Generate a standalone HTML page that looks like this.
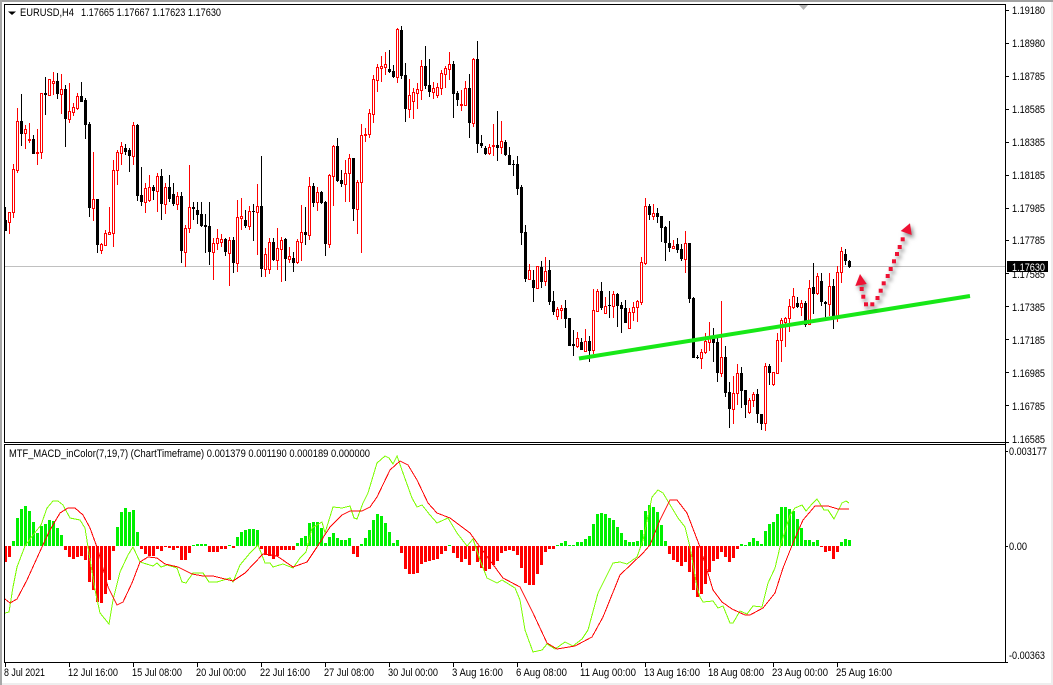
<!DOCTYPE html>
<html><head><meta charset="utf-8"><title>EURUSD,H4</title>
<style>
html,body{margin:0;padding:0;background:#fff;width:1053px;height:685px;overflow:hidden}
svg{display:block}
text{font-family:"Liberation Sans",sans-serif;font-size:11px;fill:#000}
</style></head><body>
<svg width="1053" height="685" viewBox="0 0 1053 685" xmlns="http://www.w3.org/2000/svg">
<rect width="1053" height="685" fill="#fff"/>
<rect x="0" y="0" width="1053" height="2" fill="#a0a0a0"/>
<rect x="0" y="0" width="2" height="685" fill="#a8a8a8"/>
<rect x="1051" y="2" width="2" height="683" fill="#eeeeee"/>
<rect x="2" y="683" width="1051" height="2" fill="#eeeeee"/>
<path d="M799 5h9l-4.500 5z" fill="#b4b4b4"/>
<g shape-rendering="crispEdges">
<path d="M5 266.500H1005" stroke="#c0c0c0" stroke-width="1" fill="none"/>
<!-- black wicks -->
<path fill="none" stroke="#000" stroke-width="1" d="M5.500 207V230M21.500 94V146M33.500 135V154M45.500 77V115M57.500 73V99M65.500 85V147M81.500 82V102M85.500 98V139M89.500 122V217M97.500 199V253M125.500 144V155M129.500 148V172M137.500 124V201M141.500 167V206M153.500 185V200M161.500 169V220M169.500 175V202M173.500 183V206M181.500 192V263M193.500 202V220M197.500 202V224M201.500 202V227M205.500 214V253M209.500 202V265M225.500 238V256M233.500 237V273M245.500 210V228M253.500 204V241M261.500 156V277M273.500 238V261M285.500 238V281M293.500 252V272M305.500 207V245M313.500 183V207M321.500 191V204M325.500 201V256M337.500 138V182M341.500 170V187M353.500 158V221M389.500 50V73M393.500 65V78M401.500 26V79M405.500 63V122M425.500 46V89M429.500 59V97M453.500 61V118M457.500 91V106M469.500 74V138M477.500 41V153M481.500 135V148M485.500 146V155M497.500 111V161M505.500 140V156M509.500 147V165M513.500 160V176M517.500 156V195M521.500 185V245M525.500 225V282M533.500 270V302M541.500 261V288M549.500 260V305M553.500 291V315M565.500 300V328M569.500 318V346M573.500 330V356M581.500 338V350M589.500 336V362M601.500 282V310M609.500 291V318M617.500 293V327M621.500 302V333M625.500 300V323M649.500 204V220M657.500 208V223M661.500 216V242M665.500 226V261M669.500 221V252M677.500 238V253M681.500 244V261M689.500 243V303M693.500 297V358M697.500 355V359M713.500 328V362M717.500 338V382M725.500 346V397M729.500 382V428M741.500 367V408M745.500 390V418M757.500 389V423M761.500 414V430M769.500 364V385M797.500 297V308M805.500 301V327M813.500 263V314M821.500 273V306M825.500 301V317M833.500 279V329M845.500 249V265M849.500 260V268"/>
<!-- black bodies -->
<path fill="none" stroke="#000" stroke-width="3" d="M5.500 220V231M21.500 121V134M33.500 139V154M45.500 93V95M57.500 81V94M65.500 89V119M81.500 96V102M85.500 100V125M89.500 124V208M97.500 199V245M125.500 148V152M129.500 150V156M137.500 125V196M141.500 195V202M153.500 187V191M161.500 176V204M169.500 187V199M173.500 194V204M181.500 196V251M193.500 207V209M197.500 210V215M201.500 214V226M205.500 225V227M209.500 226V252M225.500 239V252M233.500 240V263M245.500 220V226M253.500 211V212M261.500 206V269M273.500 242V260M285.500 239V259M293.500 258V263M305.500 232V235M313.500 186V203M321.500 192V203M325.500 202V244M337.500 146V181M341.500 180V184M353.500 158V209M389.500 69V72M393.500 71V77M401.500 30V76M405.500 75V109M425.500 66V86M429.500 85V92M453.500 64V94M457.500 93V100M469.500 88V123M477.500 59V144M481.500 143V146M485.500 148V154M497.500 145V148M505.500 142V155M509.500 155V165M513.500 164V165M517.500 164V189M521.500 187V233M525.500 232V279M533.500 280V288M541.500 267V282M549.500 270V302M553.500 301V312M565.500 308V319M569.500 318V346M573.500 344V346M581.500 342V350M589.500 341V351M601.500 291V308M609.500 305V306M617.500 294V306M621.500 305V309M625.500 308V323M649.500 206V215M657.500 213V217M661.500 216V228M665.500 227V243M669.500 243V248M677.500 244V250M681.500 249V259M689.500 243V299M693.500 298V358M697.500 357V358M713.500 338V343M717.500 342V373M725.500 357V393M729.500 392V409M741.500 373V391M745.500 390V405M757.500 394V414M761.500 414V424M769.500 366V373M797.500 303V307M805.500 303V325M813.500 287V294M821.500 281V302M825.500 302V304M833.500 286V317M845.500 254V261M849.500 261V267"/>
<!-- red wicks -->
<path fill="none" stroke="#f00" stroke-width="1" d="M9.500 212V234M13.500 164V218M17.500 108V173M25.500 125V149M29.500 123V143M37.500 129V165M41.500 93V159M49.500 79V96M53.500 72V95M61.500 74V114M69.500 83V123M73.500 103V116M77.500 93V110M93.500 152V221M101.500 243V254M105.500 230V246M109.500 207V235M113.500 160V247M117.500 150V185M121.500 142V165M133.500 122V165M145.500 183V213M149.500 175V202M157.500 173V212M165.500 183V214M177.500 192V210M185.500 225V267M189.500 165V233M213.500 238V280M217.500 229V250M221.500 234V247M229.500 237V286M237.500 200V272M241.500 198V230M249.500 206V230M257.500 184V255M265.500 248V277M269.500 238V274M277.500 228V270M281.500 237V282M289.500 247V263M297.500 239V264M301.500 205V261M309.500 177V240M317.500 187V211M329.500 174V248M333.500 145V206M345.500 160V202M349.500 154V202M357.500 180V234M361.500 124V253M365.500 128V142M369.500 109V138M373.500 75V123M377.500 64V92M381.500 56V82M385.500 52V75M397.500 28V83M409.500 79V118M413.500 88V119M417.500 83V109M421.500 60V100M433.500 82V99M437.500 83V98M441.500 70V95M445.500 66V88M449.500 52V80M461.500 90V111M465.500 81V105M473.500 58V127M489.500 144V155M493.500 124V156M501.500 121V154M529.500 264V280M537.500 266V288M545.500 257V286M557.500 307V320M561.500 305V319M577.500 332V348M585.500 329V352M593.500 289V354M597.500 289V312M605.500 297V314M613.500 291V318M629.500 308V328M633.500 302V321M637.500 300V322M641.500 257V305M645.500 198V265M653.500 204V220M673.500 240V249M685.500 231V273M701.500 349V369M705.500 333V354M709.500 322V351M721.500 301V377M733.500 376V424M737.500 364V405M749.500 398V414M753.500 392V407M765.500 363V431M773.500 372V386M777.500 333V374M781.500 318V362M785.500 317V347M789.500 299V332M793.500 288V309M801.500 300V316M809.500 280V325M817.500 273V295M829.500 273V316M837.500 266V322M841.500 247V283"/>
<!-- red hollow bodies -->
<path fill="#fff" stroke="#f00" stroke-width="1" d="M8.500 212.500h2V222.500h-2zM12.500 169.500h2V212.500h-2zM16.500 121.500h2V170.500h-2zM24.500 129.500h2V133.500h-2zM28.500 139.500h2V140.500h-2zM36.500 152.500h2V153.500h-2zM40.500 93.500h2V152.500h-2zM48.500 79.500h2V95.500h-2zM52.500 81.500h2V83.500h-2zM60.500 89.500h2V94.500h-2zM68.500 111.500h2V119.500h-2zM72.500 107.500h2V112.500h-2zM76.500 96.500h2V108.500h-2zM92.500 199.500h2V208.500h-2zM100.500 244.500h2V250.500h-2zM104.500 233.500h2V245.500h-2zM108.500 232.500h2V234.500h-2zM112.500 170.500h2V233.500h-2zM116.500 152.500h2V170.500h-2zM120.500 146.500h2V153.500h-2zM132.500 125.500h2V156.500h-2zM144.500 188.500h2V202.500h-2zM148.500 187.500h2V200.500h-2zM156.500 176.500h2V191.500h-2zM164.500 187.500h2V204.500h-2zM176.500 196.500h2V204.500h-2zM184.500 228.500h2V252.500h-2zM188.500 207.500h2V228.500h-2zM212.500 243.500h2V252.500h-2zM216.500 238.500h2V243.500h-2zM220.500 239.500h2V242.500h-2zM228.500 240.500h2V253.500h-2zM236.500 217.500h2V263.500h-2zM240.500 216.500h2V218.500h-2zM248.500 211.500h2V226.500h-2zM256.500 206.500h2V212.500h-2zM264.500 254.500h2V269.500h-2zM268.500 242.500h2V269.500h-2zM276.500 248.500h2V260.500h-2zM280.500 240.500h2V249.500h-2zM288.500 256.500h2V259.500h-2zM296.500 241.500h2V262.500h-2zM300.500 232.500h2V242.500h-2zM308.500 186.500h2V235.500h-2zM316.500 192.500h2V202.500h-2zM328.500 175.500h2V244.500h-2zM332.500 146.500h2V176.500h-2zM344.500 173.500h2V184.500h-2zM348.500 158.500h2V173.500h-2zM356.500 182.500h2V209.500h-2zM360.500 135.500h2V182.500h-2zM364.500 134.500h2V135.500h-2zM368.500 113.500h2V134.500h-2zM372.500 79.500h2V114.500h-2zM376.500 67.500h2V80.500h-2zM380.500 66.500h2V68.500h-2zM384.500 64.500h2V67.500h-2zM396.500 29.500h2V77.500h-2zM408.500 95.500h2V109.500h-2zM412.500 92.500h2V101.500h-2zM416.500 89.500h2V93.500h-2zM420.500 66.500h2V90.500h-2zM432.500 88.500h2V92.500h-2zM436.500 87.500h2V95.500h-2zM440.500 73.500h2V88.500h-2zM444.500 68.500h2V74.500h-2zM448.500 64.500h2V69.500h-2zM460.500 104.500h2V105.500h-2zM464.500 88.500h2V105.500h-2zM472.500 59.500h2V123.500h-2zM488.500 147.500h2V153.500h-2zM492.500 145.500h2V146.500h-2zM500.500 141.500h2V147.500h-2zM528.500 270.500h2V279.500h-2zM536.500 266.500h2V288.500h-2zM544.500 271.500h2V281.500h-2zM556.500 309.500h2V316.500h-2zM560.500 308.500h2V310.500h-2zM576.500 338.500h2V346.500h-2zM584.500 341.500h2V351.500h-2zM592.500 310.500h2V350.500h-2zM596.500 291.500h2V311.500h-2zM604.500 306.500h2V313.500h-2zM612.500 294.500h2V306.500h-2zM628.500 312.500h2V328.500h-2zM632.500 307.500h2V312.500h-2zM636.500 301.500h2V307.500h-2zM640.500 262.500h2V302.500h-2zM644.500 206.500h2V263.500h-2zM652.500 213.500h2V216.500h-2zM672.500 246.500h2V248.500h-2zM684.500 243.500h2V259.500h-2zM700.500 352.500h2V358.500h-2zM704.500 341.500h2V352.500h-2zM708.500 338.500h2V342.500h-2zM720.500 357.500h2V373.500h-2zM732.500 393.500h2V409.500h-2zM736.500 373.500h2V393.500h-2zM748.500 400.500h2V412.500h-2zM752.500 394.500h2V400.500h-2zM764.500 366.500h2V423.500h-2zM772.500 372.500h2V384.500h-2zM776.500 340.500h2V373.500h-2zM780.500 320.500h2V340.500h-2zM784.500 318.500h2V322.500h-2zM788.500 306.500h2V318.500h-2zM792.500 296.500h2V307.500h-2zM800.500 303.500h2V307.500h-2zM808.500 288.500h2V324.500h-2zM816.500 276.500h2V293.500h-2zM828.500 286.500h2V304.500h-2zM836.500 272.500h2V317.500h-2zM840.500 251.500h2V272.500h-2z"/>
<!-- histogram green -->
<path fill="none" stroke="#00f000" stroke-width="3" d="M13.500 546v-5M17.500 546v-28M21.500 546v-37M25.500 546v-40M29.500 546v-35M33.500 546v-24M37.500 546v-13M41.500 546v-20M45.500 546v-22M49.500 546v-26M53.500 546v-25M57.500 546v-18M61.500 546v-11M117.500 546v-19M121.500 546v-34M125.500 546v-38M129.500 546v-34M133.500 546v-36M137.500 546v-14M193.500 546v-1M197.500 546v-2M201.500 546v-2M205.500 546v-2M229.500 546v-1M237.500 546v-9M241.500 546v-14M245.500 546v-16M249.500 546v-17M253.500 546v-17M257.500 546v-16M297.500 546v-3M301.500 546v-8M305.500 546v-10M309.500 546v-23M313.500 546v-24M317.500 546v-24M321.500 546v-18M325.500 546v-3M329.500 546v-9M333.500 546v-13M337.500 546v-8M341.500 546v-6M345.500 546v-6M349.500 546v-8M361.500 546v-2M365.500 546v-8M369.500 546v-16M373.500 546v-26M377.500 546v-32M381.500 546v-30M385.500 546v-23M389.500 546v-14M393.500 546v-3M397.500 546v-6M449.500 546v-1M557.500 546v-1M561.500 546v-3M565.500 546v-5M569.500 546v-1M573.500 546v-1M577.500 546v-4M581.500 546v-4M585.500 546v-7M589.500 546v-10M593.500 546v-22M597.500 546v-32M601.500 546v-33M605.500 546v-32M609.500 546v-28M613.500 546v-26M617.500 546v-19M621.500 546v-13M625.500 546v-6M629.500 546v-4M633.500 546v-4M637.500 546v-5M641.500 546v-16M645.500 546v-35M649.500 546v-41M653.500 546v-39M657.500 546v-34M661.500 546v-21M665.500 546v-5M741.500 546v-2M745.500 546v-1M749.500 546v-4M753.500 546v-8M757.500 546v-5M761.500 546v-2M765.500 546v-15M769.500 546v-22M773.500 546v-24M777.500 546v-32M781.500 546v-39M785.500 546v-39M789.500 546v-37M793.500 546v-35M797.500 546v-27M801.500 546v-18M805.500 546v-6M809.500 546v-6M813.500 546v-4M817.500 546v-6M841.500 546v-4M845.500 546v-7M849.500 546v-6"/>
<!-- histogram red -->
<path fill="none" stroke="#f00" stroke-width="3" d="M5.500 546v16M9.500 546v11M65.500 546v4M69.500 546v11M73.500 546v13M77.500 546v11M81.500 546v10M85.500 546v14M89.500 546v36M93.500 546v44M97.500 546v56M101.500 546v57M105.500 546v48M109.500 546v34M113.500 546v5M141.500 546v3M145.500 546v8M149.500 546v10M153.500 546v10M157.500 546v3M161.500 546v5M165.500 546v1M169.500 546v2M173.500 546v4M177.500 546v2M181.500 546v14M185.500 546v14M189.500 546v7M209.500 546v6M213.500 546v6M217.500 546v6M221.500 546v3M225.500 546v3M233.500 546v2M261.500 546v3M265.500 546v9M269.500 546v10M273.500 546v13M277.500 546v10M281.500 546v4M285.500 546v4M289.500 546v4M293.500 546v4M353.500 546v8M357.500 546v11M401.500 546v7M405.500 546v23M409.500 546v28M413.500 546v28M417.500 546v27M421.500 546v18M425.500 546v16M429.500 546v15M433.500 546v14M437.500 546v13M441.500 546v8M445.500 546v5M453.500 546v7M457.500 546v12M461.500 546v16M465.500 546v13M469.500 546v19M473.500 546v5M477.500 546v16M481.500 546v22M485.500 546v25M489.500 546v23M493.500 546v19M497.500 546v15M501.500 546v7M505.500 546v5M509.500 546v4M513.500 546v5M517.500 546v9M521.500 546v22M525.500 546v37M529.500 546v39M533.500 546v39M537.500 546v28M541.500 546v19M545.500 546v6M549.500 546v3M553.500 546v3M669.500 546v8M673.500 546v14M677.500 546v16M681.500 546v20M685.500 546v16M689.500 546v26M693.500 546v44M697.500 546v51M701.500 546v48M705.500 546v38M709.500 546v26M713.500 546v15M717.500 546v13M721.500 546v6M725.500 546v11M729.500 546v16M733.500 546v12M737.500 546v3M821.500 546v1M825.500 546v6M829.500 546v5M833.500 546v13M837.500 546v6"/>
<!-- MACD lines -->
<polyline fill="none" stroke="#7cfc00" stroke-width="1" points="5,613 9,612 13,587 17,567 25,546 33,535 41,525 47,508 53,501 58,501 63,505 70,518 80,520 85,528 88,547 95,590 100,613 109,624 113,600 120,572 128,555 133,547 140,562 153,566 157,563 161,567 167,565 177,568 182,582 186,583 193,573 203,573 209,582 217,582 230,578 233,582 240,565 250,553 258,545 265,563 270,563 273,567 283,564 293,568 300,558 306,552 312,528 322,522 325,533 333,507 342,508 350,506 354,518 357,519 363,503 368,493 377,463 385,456 389,458 393,464 397,456 403,473 412,498 417,507 422,505 430,515 437,523 448,518 457,533 467,546 473,539 480,560 487,578 497,583 502,580 515,588 520,600 525,630 533,652 542,650 547,644 555,649 565,642 573,646 582,639 588,630 598,593 613,563 620,562 627,564 637,557 643,540 652,497 658,490 663,493 678,518 685,527 690,547 697,587 700,597 703,602 713,601 718,608 723,606 730,623 733,623 740,611 747,614 753,606 762,607 768,583 775,568 780,547 790,515 795,508 802,505 806,511 812,504 817,499 824,510 828,510 834,519 842,503 846,501 849,503"/>
<polyline fill="none" stroke="#f00" stroke-width="1" points="5,599 10,603 17,599 27,580 42,547 50,530 60,513 68,508 75,508 83,515 90,528 98,550 108,587 117,605 123,602 132,583 140,562 148,557 157,558 165,564 178,567 192,574 203,576 213,576 233,581 245,573 263,554 277,556 293,567 307,562 317,547 330,527 342,515 350,511 362,511 370,507 377,497 390,470 400,461 408,465 417,480 428,503 437,513 450,518 470,533 480,547 503,578 520,587 533,613 547,643 557,649 575,646 592,637 603,617 620,575 643,553 650,545 660,520 670,500 677,500 687,513 700,547 707,570 713,590 722,602 732,609 745,615 750,615 763,608 775,593 783,568 793,543 803,520 815,506 828,506 838,509 849,509"/>
<!-- frames -->
<path fill="none" stroke="#000" stroke-width="1" d="M4 4.500H1005.500V662.500H4.500V444.500H1005M4.500 4V442.500H1009M1005 10.500h4M1005 43.500h4M1005 76.500h4M1005 109.500h4M1005 142.500h4M1005 175.500h4M1005 208.500h4M1005 240.500h4M1005 273.500h4M1005 306.500h4M1005 339.500h4M1005 372.500h4M1005 405.500h4M1005 451.500h3M1005 546.500h3M1005 662.500h3M69.500 662v5M133.500 662v5M197.500 662v5M261.500 662v5M325.500 662v5M389.500 662v5M453.500 662v5M517.500 662v5M581.500 662v5M645.500 662v5M709.500 662v5M773.500 662v5M837.500 662v5M5.500 662v5"/>
</g>
<!-- trend line -->
<line x1="579" y1="358.500" x2="970" y2="296" stroke="#17e817" stroke-width="4"/>
<!-- arrows -->
<g fill="#ee1133" style="filter:drop-shadow(2px 3px 2px rgba(0,0,0,.5))">
<rect x="864" y="302.300" width="4" height="4"/><rect x="861.300" y="294.700" width="4" height="4"/><rect x="859.700" y="287" width="4" height="4"/>
<path d="M860 274L855.300 286L866.700 284z"/>
<rect x="870.300" y="302.300" width="4" height="4"/><rect x="875.500" y="296" width="4" height="4"/><rect x="878.700" y="288.700" width="4" height="4"/><rect x="881.700" y="281.300" width="4" height="4"/><rect x="885.700" y="274" width="4" height="4"/><rect x="888.700" y="267" width="4" height="4"/><rect x="892" y="259.300" width="4" height="4"/><rect x="895" y="252" width="4" height="4"/><rect x="897.700" y="245" width="4" height="4"/><rect x="900.700" y="237.300" width="4" height="4"/>
<path d="M910 223.300L900.700 231L911.700 235z"/>
</g>
<!-- header -->
<path d="M8 11.500h8l-4 3.500z" fill="#000"/>
<text x="20" y="16" textLength="54" lengthAdjust="spacingAndGlyphs">EURUSD,H4</text>
<text x="81" y="16" textLength="140" lengthAdjust="spacingAndGlyphs">1.17665 1.17667 1.17623 1.17630</text>
<text x="9" y="457" textLength="361" lengthAdjust="spacingAndGlyphs">MTF_MACD_inColor(7,19,7) (ChartTimeframe) 0.001379 0.001190 0.000189 0.000000</text>
<!-- price axis -->
<g>
<text x="1012" y="14" textLength="33" lengthAdjust="spacingAndGlyphs">1.19180</text>
<text x="1012" y="47" textLength="33" lengthAdjust="spacingAndGlyphs">1.18980</text>
<text x="1012" y="80" textLength="33" lengthAdjust="spacingAndGlyphs">1.18785</text>
<text x="1012" y="113" textLength="33" lengthAdjust="spacingAndGlyphs">1.18585</text>
<text x="1012" y="146" textLength="33" lengthAdjust="spacingAndGlyphs">1.18385</text>
<text x="1012" y="179" textLength="33" lengthAdjust="spacingAndGlyphs">1.18185</text>
<text x="1012" y="212" textLength="33" lengthAdjust="spacingAndGlyphs">1.17985</text>
<text x="1012" y="244" textLength="33" lengthAdjust="spacingAndGlyphs">1.17785</text>
<text x="1012" y="278" textLength="33" lengthAdjust="spacingAndGlyphs">1.17585</text>
<text x="1012" y="311" textLength="33" lengthAdjust="spacingAndGlyphs">1.17385</text>
<text x="1012" y="344" textLength="33" lengthAdjust="spacingAndGlyphs">1.17185</text>
<text x="1012" y="377" textLength="33" lengthAdjust="spacingAndGlyphs">1.16985</text>
<text x="1012" y="410" textLength="33" lengthAdjust="spacingAndGlyphs">1.16785</text>
<text x="1012" y="443" textLength="33" lengthAdjust="spacingAndGlyphs">1.16585</text>
<rect x="1007" y="261" width="41" height="11" fill="#000"/>
<text x="1012" y="271" textLength="33" lengthAdjust="spacingAndGlyphs" style="fill:#fff">1.17630</text>
<text x="1009" y="455" textLength="38" lengthAdjust="spacingAndGlyphs">0.003177</text>
<text x="1009" y="550" textLength="18" lengthAdjust="spacingAndGlyphs">0.00</text>
<text x="1009" y="659" textLength="36" lengthAdjust="spacingAndGlyphs">-0.00363</text>
</g>
<!-- time axis -->
<g>
<text x="4" y="676" textLength="41" lengthAdjust="spacingAndGlyphs">8 Jul 2021</text>
<text x="68" y="676" textLength="50" lengthAdjust="spacingAndGlyphs">12 Jul 16:00</text>
<text x="132" y="676" textLength="50" lengthAdjust="spacingAndGlyphs">15 Jul 08:00</text>
<text x="196" y="676" textLength="50" lengthAdjust="spacingAndGlyphs">20 Jul 00:00</text>
<text x="260" y="676" textLength="50" lengthAdjust="spacingAndGlyphs">22 Jul 16:00</text>
<text x="324" y="676" textLength="50" lengthAdjust="spacingAndGlyphs">27 Jul 08:00</text>
<text x="388" y="676" textLength="50" lengthAdjust="spacingAndGlyphs">30 Jul 00:00</text>
<text x="452" y="676" textLength="51" lengthAdjust="spacingAndGlyphs">3 Aug 16:00</text>
<text x="516" y="676" textLength="51" lengthAdjust="spacingAndGlyphs">6 Aug 08:00</text>
<text x="580" y="676" textLength="56" lengthAdjust="spacingAndGlyphs">11 Aug 00:00</text>
<text x="644" y="676" textLength="56" lengthAdjust="spacingAndGlyphs">13 Aug 16:00</text>
<text x="708" y="676" textLength="56" lengthAdjust="spacingAndGlyphs">18 Aug 08:00</text>
<text x="772" y="676" textLength="56" lengthAdjust="spacingAndGlyphs">23 Aug 00:00</text>
<text x="836" y="676" textLength="56" lengthAdjust="spacingAndGlyphs">25 Aug 16:00</text>
</g>
</svg>
</body></html>
